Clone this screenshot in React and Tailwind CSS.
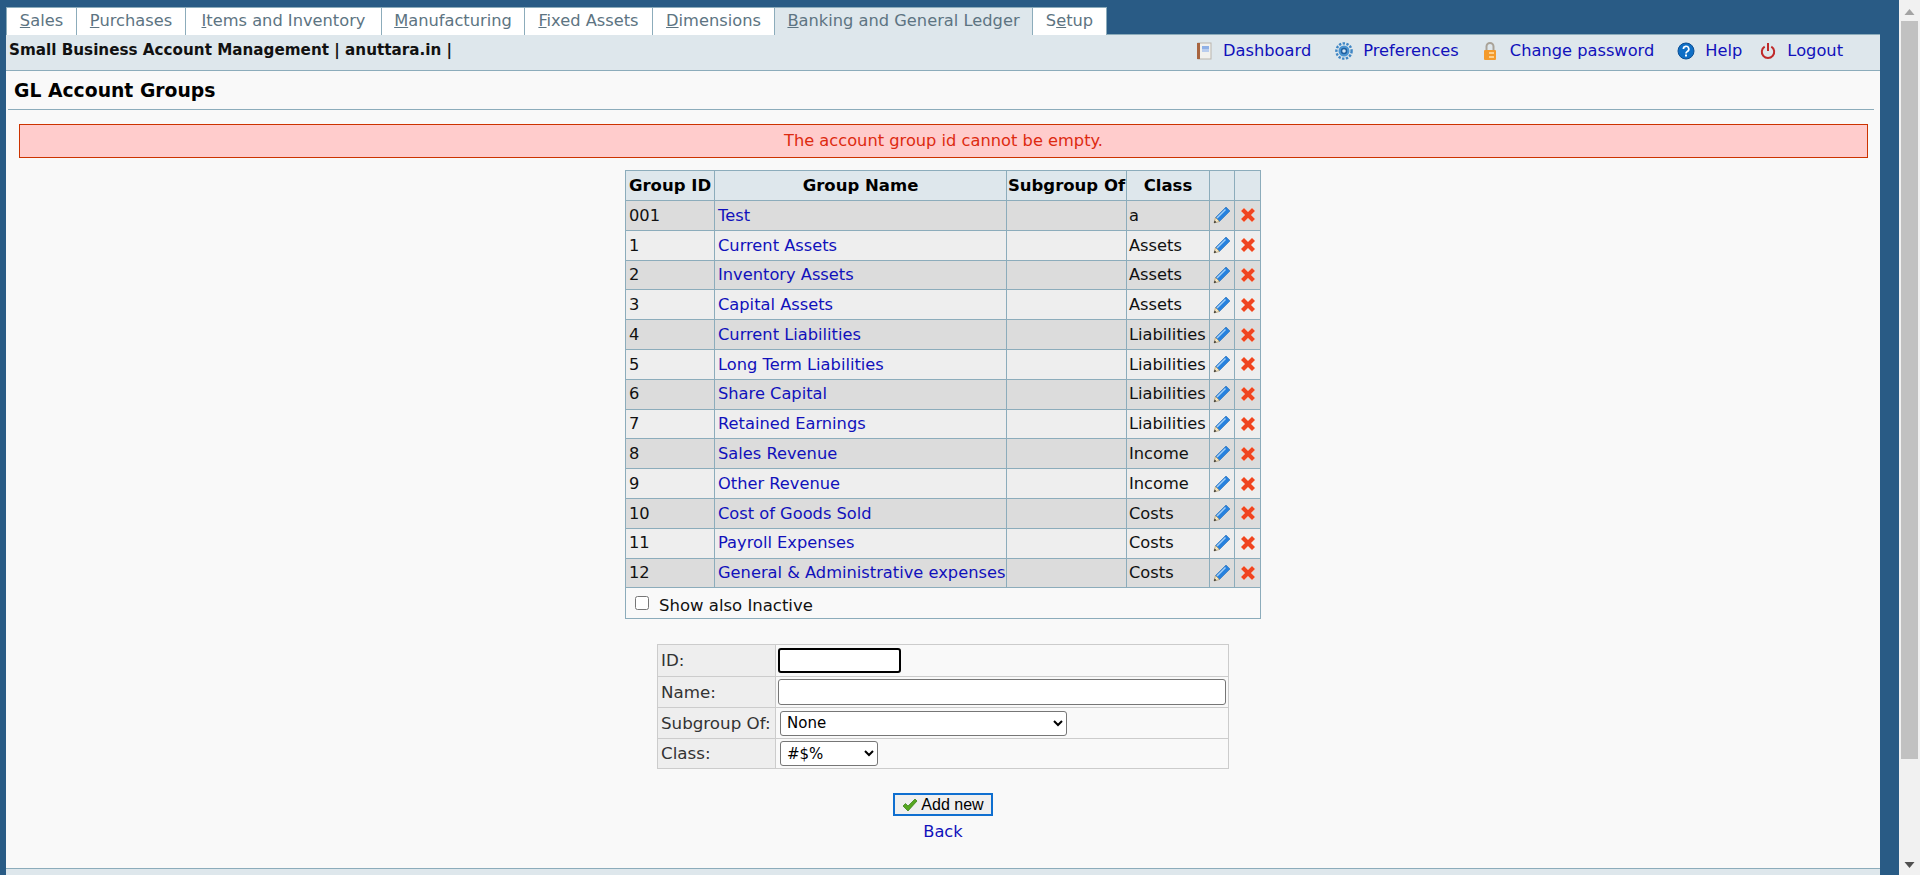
const tabs = [
  { before: '', key: 'S', after: 'ales', w: 'w-[71px]', first: true },
  { before: '', key: 'P', after: 'urchases', w: 'w-[109px]' },
  { before: '', key: 'I', after: 'tems and Inventory', w: 'w-[196px]' },
  { before: '', key: 'M', after: 'anufacturing', w: 'w-[143px]' },
  { before: '', key: 'F', after: 'ixed Assets', w: 'w-[128px]' },
  { before: '', key: 'D', after: 'imensions', w: 'w-[122px]' },
  { before: '', key: 'B', after: 'anking and General Ledger', w: 'w-[258px]', active: true },
  { before: 'S', key: 'e', after: 'tup', w: 'w-[74px]' },
];

const groups = [
  ['001', 'Test', 'a'],
  ['1', 'Current Assets', 'Assets'],
  ['2', 'Inventory Assets', 'Assets'],
  ['3', 'Capital Assets', 'Assets'],
  ['4', 'Current Liabilities', 'Liabilities'],
  ['5', 'Long Term Liabilities', 'Liabilities'],
  ['6', 'Share Capital', 'Liabilities'],
  ['7', 'Retained Earnings', 'Liabilities'],
  ['8', 'Sales Revenue', 'Income'],
  ['9', 'Other Revenue', 'Income'],
  ['10', 'Cost of Goods Sold', 'Costs'],
  ['11', 'Payroll Expenses', 'Costs'],
  ['12', 'General & Administrative expenses', 'Costs'],
];

function NotebookIcon() {
  return (
    <svg width="16" height="18" viewBox="0 0 16 18">
      <rect x="2" y="1" width="13" height="16" fill="#f1f1ee" stroke="#b9b5ad" />
      <rect x="1" y="1" width="3" height="16" fill="#a8653f" />
      <rect x="6" y="4" width="7" height="3" fill="#8fb0e6" />
      <rect x="6" y="7" width="7" height="3" fill="#b9cdee" />
    </svg>
  );
}

function GearIcon() {
  return (
    <svg width="18" height="18" viewBox="0 0 18 18">
      <circle cx="9" cy="9" r="7.6" fill="none" stroke="#3f86c4" strokeWidth="2.400" strokeDasharray="2.400 1.400" />
      <circle cx="9" cy="9" r="5.500" fill="#4a94d2" />
      <circle cx="9" cy="9" r="3.200" fill="#1f5f9e" />
      <circle cx="9" cy="9" r="1.800" fill="#d5e6f4" />
    </svg>
  );
}

function LockIcon() {
  return (
    <svg width="14" height="20" viewBox="0 0 14 20">
      <path d="M3.500 9V5.500a3.500 3.500 0 0 1 7 0V9" fill="none" stroke="#a9a398" strokeWidth="2" />
      <rect x="1" y="9" width="12" height="10" rx="1" fill="#f49b2c" />
      <rect x="6" y="11" width="5" height="2" fill="#ffd08a" />
      <rect x="6" y="15" width="5" height="2" fill="#ffd08a" />
    </svg>
  );
}

function HelpIcon() {
  return (
    <svg width="18" height="18" viewBox="0 0 18 18">
      <circle cx="9" cy="9" r="8" fill="#0f6fc6" stroke="#0b4f94" />
      <path d="M6.400 7a2.700 2.700 0 1 1 3.900 2.400c-.9.500-1.300 1-1.300 2" fill="none" stroke="#fff" strokeWidth="1.700" />
      <rect x="8" y="12.500" width="2" height="2" fill="#fff" />
    </svg>
  );
}

function PowerIcon() {
  return (
    <svg width="16" height="18" viewBox="0 0 16 18">
      <path d="M4.700 4.600a6.200 6.200 0 1 0 6.600 0" fill="none" stroke="#bf2a2a" strokeWidth="2" />
      <path d="M8 1v8" stroke="#bf2a2a" strokeWidth="2" />
    </svg>
  );
}

function PencilIcon() {
  return (
    <svg width="18" height="18" viewBox="0 0 18 18">
      <path d="M13 1l4 4-10.500 10.500-4-4z" fill="#2681de" stroke="#1d62ad" strokeWidth=".5" />
      <path d="M12 3l1 1-8.500 8.500-1-1z" fill="#a5d0f6" />
      <path d="M2.500 11.500l4 4-5.500 1.500z" fill="#f6e6c0" stroke="#8f7a50" strokeWidth=".5" />
      <path d="M1 17l.7-2.400 1.700 1.700z" fill="#222" />
    </svg>
  );
}

function CrossIcon() {
  return (
    <svg width="18" height="18" viewBox="0 0 18 18">
      <path d="M2 5l3-3 4 4 4-4 3 3-4 4 4 4-3 3-4-4-4 4-3-3 4-4z" fill="#ef4420" stroke="#f59a80" strokeWidth=".9" strokeLinejoin="round" />
    </svg>
  );
}

function CheckIcon() {
  return (
    <svg width="16" height="14" viewBox="0 0 16 14">
      <path d="M1 8l2.500-2.500L6 8l7-7 2 2-9 10z" fill="#55a61f" stroke="#2f7a10" strokeWidth=".7" />
    </svg>
  );
}

function TopLink({ icon, label, gap, className }) {
  return (
    <span className={`flex items-center ${gap} ${className}`}>
      {icon}
      <a className="text-[#1111bb]">{label}</a>
    </span>
  );
}

export default function App() {
  return (
    <div className="flex h-[875px] w-[1920px] overflow-hidden font-['DejaVu_Sans',Verdana,sans-serif] text-[16.25px] text-[#111]">
      <div className="flex-1 min-w-0 bg-[#295b85] pl-[6px] pr-[19px] pt-[7px]">
        {/* Tabs */}
        <div className="relative z-10 -mb-px flex h-[28px] items-stretch text-[#5d7482]">
          {tabs.map((tab) => (
            <div
              key={tab.key}
              className={`${tab.w} flex items-center justify-center border-t border-r border-[#8cacbb] ${tab.first ? 'border-l' : ''} ${tab.active ? 'bg-[#dee7ec]' : 'bg-white'}`}
            >
              <span>
                {tab.before}
                <span className="underline">{tab.key}</span>
                {tab.after}
              </span>
            </div>
          ))}
        </div>

        {/* Top bar */}
        <div className="flex h-[37px] items-start justify-between border-t border-b border-[#8cacbb] bg-[#dee7ec] pl-[3px] pr-[37px] pt-[6px]">
          <span className="text-[15.200px] font-bold leading-[18px]">Small Business Account Management | anuttara.in |</span>
          <div className="-mt-[2px] flex">
            <TopLink icon={<NotebookIcon />} label="Dashboard" gap="gap-[11px]" />
            <TopLink icon={<GearIcon />} label="Preferences" gap="gap-[10px]" className="ml-[24px]" />
            <TopLink icon={<LockIcon />} label="Change password" gap="gap-[13px]" className="ml-[24px]" />
            <TopLink icon={<HelpIcon />} label="Help" gap="gap-[10px]" className="ml-[23px]" />
            <TopLink icon={<PowerIcon />} label="Logout" gap="gap-[11px]" className="ml-[18px]" />
          </div>
        </div>

        <div className="h-[797px] bg-[#f9f9f9]">
          <div className="ml-[2px] mr-[6px] flex h-[39px] items-center border-b border-[#8cacbb] pl-[6px] pt-[3px] text-[18.800px] font-bold text-black">
            GL Account Groups
          </div>

          {/* Error message */}
          <div className="ml-[13px] mr-[12px] mt-[14px] flex h-[34px] items-center justify-center border border-[#cc3300] bg-[#ffcccc] text-[#dd2a10]">
            The account group id cannot be empty.
          </div>

          {/* Groups table */}
          <table className="ml-[619px] mt-[12px] w-[635px] table-fixed border-collapse border border-[#8cacbb]">
            <colgroup>
              <col className="w-[89px]" />
              <col className="w-[292px]" />
              <col className="w-[120px]" />
              <col className="w-[83px]" />
              <col className="w-[25px]" />
              <col className="w-[26px]" />
            </colgroup>
            <thead>
              <tr className="h-[30px] bg-[#dee7ec] text-[16.500px] font-bold text-black">
                <th className="border border-[#8cacbb] px-0 pt-[1px] text-center whitespace-nowrap">Group ID</th>
                <th className="border border-[#8cacbb] pt-[1px] text-center">Group Name</th>
                <th className="border border-[#8cacbb] pt-[1px] text-center whitespace-nowrap">Subgroup Of</th>
                <th className="border border-[#8cacbb] pt-[1px] text-center">Class</th>
                <th className="border border-[#8cacbb]"></th>
                <th className="border border-[#8cacbb]"></th>
              </tr>
            </thead>
            <tbody>
              {groups.map(([id, name, cls], i) => (
                <tr key={id} className={`h-[29.800px] ${i % 2 === 0 ? 'bg-[#dcdcdc]' : 'bg-[#eeeeee]'}`}>
                  <td className="border border-[#8cacbb] pl-[3px] pt-[1px]">{id}</td>
                  <td className="border border-[#8cacbb] pl-[3px] pt-[1px] text-[#1111bb] whitespace-nowrap">{name}</td>
                  <td className="border border-[#8cacbb]"></td>
                  <td className="border border-[#8cacbb] pl-[2px] pt-[1px]">{cls}</td>
                  <td className="border border-[#8cacbb]">
                    <div className="flex justify-center"><PencilIcon /></div>
                  </td>
                  <td className="border border-[#8cacbb]">
                    <div className="flex justify-center"><CrossIcon /></div>
                  </td>
                </tr>
              ))}
              <tr className="h-[31px]">
                <td colSpan={6} className="border border-[#8cacbb] pl-[9px]">
                  <span className="flex items-center gap-[10px]">
                    <input type="checkbox" className="h-[14px] w-[14px] appearance-auto" />
                    <span className="pt-[5px] text-[16.500px] leading-[20px]">Show also Inactive</span>
                  </span>
                </td>
              </tr>
            </tbody>
          </table>

          {/* New group form */}
          <table className="mx-auto mt-[25px] w-[572px] table-fixed border-collapse text-[#333]">
            <colgroup>
              <col className="w-[118px]" />
              <col />
            </colgroup>
            <tbody>
              <tr className="h-[32px]">
                <td className="border border-[#cccccc] bg-[#eeeeee] pl-[3px] text-[16.700px]">ID:</td>
                <td className="border border-[#cccccc] pl-[2px]">
                  <input className="block h-[25px] w-[123px] rounded-[3px] border-2 border-black bg-white" />
                </td>
              </tr>
              <tr className="h-[31px]">
                <td className="border border-[#cccccc] bg-[#eeeeee] pl-[3px] text-[16.700px]">Name:</td>
                <td className="border border-[#cccccc] pl-[2px]">
                  <input className="block h-[26px] w-[448px] rounded-[3px] border border-[#767676] bg-white" />
                </td>
              </tr>
              <tr className="h-[31px]">
                <td className="border border-[#cccccc] bg-[#eeeeee] pl-[3px] text-[16.700px] whitespace-nowrap">Subgroup Of:</td>
                <td className="border border-[#cccccc] pl-[4px]">
                  <select className="block h-[25px] w-[287px] appearance-auto rounded-[3px] border border-[#767676] bg-white pl-[2px] text-[15px] text-black">
                    <option>None</option>
                  </select>
                </td>
              </tr>
              <tr className="h-[30px]">
                <td className="border border-[#cccccc] bg-[#eeeeee] pl-[3px] text-[16.700px]">Class:</td>
                <td className="border border-[#cccccc] pl-[4px]">
                  <select className="block h-[25px] w-[98px] appearance-auto rounded-[3px] border border-[#767676] bg-white pl-[2px] text-[15px] text-black">
                    <option>#$%</option>
                  </select>
                </td>
              </tr>
            </tbody>
          </table>

          {/* Actions */}
          <div className="mt-[24px] flex flex-col items-center">
            <button className="flex h-[23px] w-[100px] items-center justify-center gap-[3px] border-2 border-[#0f6fd0] bg-[#efefef] font-['Liberation_Sans',Arial,sans-serif] text-[16px] text-black">
              <CheckIcon />
              Add new
            </button>
            <a className="mt-[4px] text-[#1111bb]">Back</a>
          </div>
        </div>

        <div className="h-[20px] border-t border-[#8cacbb] bg-[#dee7ec]"></div>
      </div>

      {/* Browser scrollbar */}
      <div className="flex w-[21px] flex-col items-center bg-[#f1f1f1] pl-[2px] pr-[2px]">
        <svg width="17" height="21" viewBox="0 0 17 21" className="shrink-0">
          <path d="M3.500 15l5-6 5 6z" fill="#a3a3a3" />
        </svg>
        <div className="h-[738px] w-[17px] bg-[#c1c1c1]"></div>
        <div className="flex-1"></div>
        <svg width="17" height="17" viewBox="0 0 17 17" className="shrink-0">
          <path d="M3.500 4l5 6 5-6z" fill="#505050" />
        </svg>
      </div>
    </div>
  );
}
